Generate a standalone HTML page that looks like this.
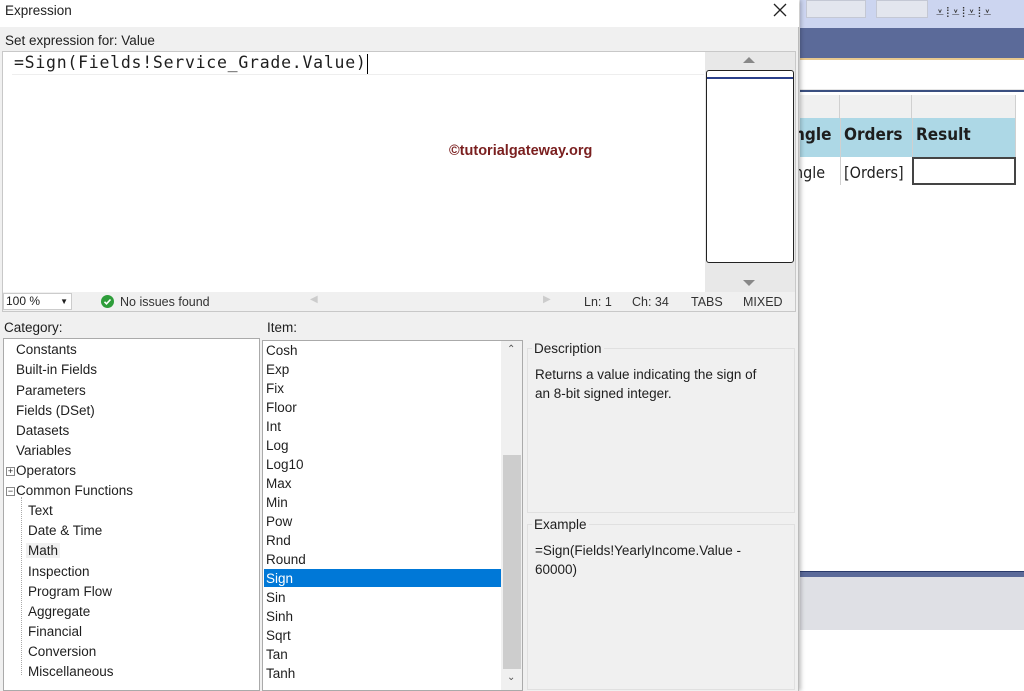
<!DOCTYPE html><html><head><style>
*{margin:0;padding:0;box-sizing:border-box}
body{width:1024px;height:691px;overflow:hidden;background:#fff;font-family:"Liberation Sans",sans-serif;font-size:13px;color:#1e1e1e;position:relative}
.a{position:absolute}
.li{position:absolute;left:0;font-size:13.5px;white-space:nowrap}
</style></head><body>
<div class="a" style="left:800px;top:0;width:224px;height:28px;background:#ccd5f0"></div>
<div class="a" style="left:806px;top:0;width:60px;height:18px;background:#e3e6ee;border:1px solid #c4c8d4"></div>
<div class="a" style="left:876px;top:0;width:52px;height:18px;background:#e3e6ee;border:1px solid #c4c8d4"></div>
<div class="a" style="left:936px;top:4px;font-size:14px;color:#333;letter-spacing:2px">⩡⁞⩡⁞⩡⁞⩡</div>
<div class="a" style="left:800px;top:28px;width:224px;height:32px;background:#5b6a99;border-bottom:2px solid #e8c98f"></div>
<div class="a" style="left:800px;top:89px;width:224px;height:3px;background:#e5e5e5;border-bottom:2px solid #3a4f80"></div>
<div class="a" style="left:800px;top:95px;width:40px;height:23px;background:#f0f0f0;border-right:1px solid #d0d0d0"></div>
<div class="a" style="left:840px;top:95px;width:72px;height:23px;background:#f0f0f0;border-right:1px solid #d0d0d0"></div>
<div class="a" style="left:912px;top:95px;width:104px;height:23px;background:#f0f0f0;border-right:1px solid #d0d0d0"></div>
<div class="a" style="left:800px;top:118px;width:216px;height:39px;background:#add8e6"></div>
<div class="a" style="left:840px;top:118px;width:1px;height:67px;background:#d0d0d0"></div>
<div class="a" style="left:912px;top:118px;width:1px;height:39px;background:#d0d0d0"></div>
<div class="a" style="left:1015px;top:118px;width:1px;height:39px;background:#d0d0d0"></div>
<div class="a" style="left:794px;top:125px;font-weight:bold;font-size:17px;font-family:'DejaVu Sans Condensed','DejaVu Sans',sans-serif">ngle</div>
<div class="a" style="left:844px;top:125px;font-weight:bold;font-size:17px;font-family:'DejaVu Sans Condensed','DejaVu Sans',sans-serif">Orders</div>
<div class="a" style="left:916px;top:125px;font-weight:bold;font-size:17px;font-family:'DejaVu Sans Condensed','DejaVu Sans',sans-serif">Result</div>
<div class="a" style="left:794px;top:163px;font-size:16px;font-family:'DejaVu Sans Condensed','DejaVu Sans',sans-serif">ngle</div>
<div class="a" style="left:844px;top:163px;font-size:16px;font-family:'DejaVu Sans Condensed','DejaVu Sans',sans-serif">[Orders]</div>
<div class="a" style="left:912px;top:157px;width:104px;height:28px;border:2px solid #444"></div>
<div class="a" style="left:800px;top:571px;width:224px;height:6px;background:#5b6a99;border-top:1px solid #2a3a6a"></div>
<div class="a" style="left:800px;top:577px;width:224px;height:53px;background:#dfe0e5"></div>
<div class="a" style="left:0;top:0;width:799px;height:691px;background:#f0f0f0;border-right:1px solid #bbb;box-shadow:2px 0 4px rgba(0,0,0,.25)"></div>
<div class="a" style="left:0;top:0;width:799px;height:27px;background:#fff"></div>
<div class="a" style="left:5px;top:3px;font-size:13.5px">Expression</div>
<svg class="a" style="left:773px;top:3px" width="14" height="14"><path d="M1 1L13 13M13 1L1 13" stroke="#222" stroke-width="1.3"/></svg>
<div class="a" style="left:5px;top:33px;font-size:13.5px">Set expression for: Value</div>
<div class="a" style="left:2px;top:51px;width:794px;height:261px;border:1px solid #c8c8c8;background:#fff"></div>
<div class="a" style="left:14px;top:53px;font-family:'DejaVu Sans Mono','Liberation Mono',monospace;font-size:16.5px;letter-spacing:0.75px">=Sign(Fields!Service_Grade.Value)</div>
<div class="a" style="left:367px;top:54px;width:1px;height:20px;background:#000"></div>
<div class="a" style="left:12px;top:74px;width:692px;height:1px;background:#eee"></div>
<div class="a" style="left:705px;top:52px;width:90px;height:240px;background:#e8e8e8"></div>
<div class="a" style="left:743px;top:57px;width:0;height:0;border:6px solid transparent;border-bottom:6px solid #888;border-top:0"></div>
<div class="a" style="left:743px;top:280px;width:0;height:0;border:6px solid transparent;border-top:6px solid #888;border-bottom:0"></div>
<div class="a" style="left:706px;top:70px;width:88px;height:193px;background:#fff;border:1px solid #222;border-radius:3px"></div>
<div class="a" style="left:707px;top:77px;width:86px;height:2px;background:#2a3f8a"></div>
<div class="a" style="left:3px;top:292px;width:792px;height:19px;background:#f0f0f0"></div>
<div class="a" style="left:3px;top:293px;width:69px;height:17px;background:#fff;border:1px solid #ccc;font-size:12px;padding-left:2px;line-height:15px">100 %<span style="position:absolute;right:3px;font-size:8px">▼</span></div>
<svg class="a" style="left:101px;top:295px" width="13" height="13"><circle cx="6.5" cy="6.5" r="6.5" fill="#2e9d3a"/><path d="M3.5 6.8l2 2 4-4.3" stroke="#fff" stroke-width="1.6" fill="none"/></svg>
<div class="a" style="left:120px;top:295px;font-size:12.5px;color:#333">No issues found</div>
<div class="a" style="left:310px;top:294px;font-size:10px;color:#ccc">◀</div>
<div class="a" style="left:543px;top:294px;font-size:10px;color:#ccc">▶</div>
<div class="a" style="left:584px;top:295px;font-size:12.5px;color:#333">Ln: 1</div>
<div class="a" style="left:632px;top:295px;font-size:12.5px;color:#333">Ch: 34</div>
<div class="a" style="left:691px;top:295px;font-size:12.5px;color:#333">TABS</div>
<div class="a" style="left:743px;top:295px;font-size:12.5px;color:#333">MIXED</div>
<div class="a" style="left:4px;top:320px;font-size:13.5px">Category:</div>
<div class="a" style="left:267px;top:320px;font-size:13.5px">Item:</div>
<div class="a" style="left:3px;top:338px;width:257px;height:353px;background:#fff;border:1px solid #aaa">
<div class="li" style="left:12px;top:3px">Constants</div>
<div class="li" style="left:12px;top:23px">Built-in Fields</div>
<div class="li" style="left:12px;top:44px">Parameters</div>
<div class="li" style="left:12px;top:64px">Fields (DSet)</div>
<div class="li" style="left:12px;top:84px">Datasets</div>
<div class="li" style="left:12px;top:104px">Variables</div>
<div class="li" style="left:12px;top:124px">Operators</div>
<div class="li" style="left:12px;top:144px">Common Functions</div>
<div class="a" style="left:2px;top:128px;width:9px;height:9px;border:1px solid #888;font-size:9px;line-height:7px;text-align:center">+</div>
<div class="a" style="left:2px;top:148px;width:9px;height:9px;border:1px solid #888;font-size:9px;line-height:7px;text-align:center">−</div>
<div class="a" style="left:17px;top:158px;width:1px;height:178px;border-left:1px dotted #aaa"></div>
<div class="li" style="left:24px;top:164px">Text</div>
<div class="li" style="left:24px;top:184px">Date &amp; Time</div>
<div class="li" style="left:22px;top:204px;background:#f0f0f0;padding:0 2px">Math</div>
<div class="li" style="left:24px;top:225px">Inspection</div>
<div class="li" style="left:24px;top:245px">Program Flow</div>
<div class="li" style="left:24px;top:265px">Aggregate</div>
<div class="li" style="left:24px;top:285px">Financial</div>
<div class="li" style="left:24px;top:305px">Conversion</div>
<div class="li" style="left:24px;top:325px">Miscellaneous</div>
</div>
<div class="a" style="left:262px;top:340px;width:261px;height:351px;background:#fff;border:1px solid #aaa">
<div class="li" style="left:3px;top:2px">Cosh</div>
<div class="li" style="left:3px;top:21px">Exp</div>
<div class="li" style="left:3px;top:40px">Fix</div>
<div class="li" style="left:3px;top:59px">Floor</div>
<div class="li" style="left:3px;top:78px">Int</div>
<div class="li" style="left:3px;top:97px">Log</div>
<div class="li" style="left:3px;top:116px">Log10</div>
<div class="li" style="left:3px;top:135px">Max</div>
<div class="li" style="left:3px;top:154px">Min</div>
<div class="li" style="left:3px;top:173px">Pow</div>
<div class="li" style="left:3px;top:192px">Rnd</div>
<div class="li" style="left:3px;top:211px">Round</div>
<div class="a" style="left:1px;top:228px;width:237px;height:18px;background:#0078d7"></div>
<div class="li" style="left:3px;top:230px;color:#fff">Sign</div>
<div class="li" style="left:3px;top:249px">Sin</div>
<div class="li" style="left:3px;top:268px">Sinh</div>
<div class="li" style="left:3px;top:287px">Sqrt</div>
<div class="li" style="left:3px;top:306px">Tan</div>
<div class="li" style="left:3px;top:325px">Tanh</div>
<div class="a" style="left:238px;top:0;width:21px;height:349px;background:#f0f0f0"></div>
<div class="a" style="left:240px;top:114px;width:18px;height:214px;background:#cdcdcd"></div>
<div class="a" style="left:244px;top:3px;font-size:10px;color:#555">⌃</div>
<div class="a" style="left:244px;top:331px;font-size:10px;color:#555">⌄</div>
</div>
<div class="a" style="left:527px;top:348px;width:268px;height:165px;border:1px solid #e0e0e0"></div>
<div class="a" style="left:532px;top:341px;background:#f0f0f0;padding:0 2px;font-size:13.5px">Description</div>
<div class="a" style="left:535px;top:365px;font-size:13.5px;line-height:19px">Returns a value indicating the sign of<br>an 8-bit signed integer.</div>
<div class="a" style="left:527px;top:524px;width:268px;height:166px;border:1px solid #e0e0e0"></div>
<div class="a" style="left:532px;top:517px;background:#f0f0f0;padding:0 2px;font-size:13.5px">Example</div>
<div class="a" style="left:535px;top:541px;font-size:13.5px;line-height:19px">=Sign(Fields!YearlyIncome.Value -<br>60000)</div>
<div class="a" style="left:449px;top:143px;font-weight:bold;font-size:14.5px;color:#7a1f1f">©tutorialgateway.org</div>
</body></html>
